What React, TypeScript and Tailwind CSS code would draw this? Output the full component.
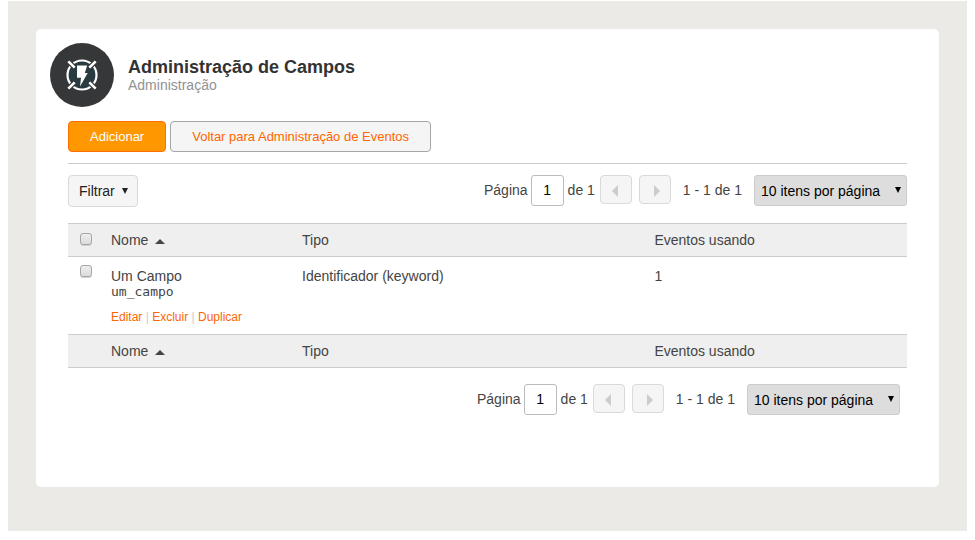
import React, { useState } from 'react';

interface Field {
  name: string;
  key: string;
  type: string;
  events: number;
}

const fields: Field[] = [
  { name: 'Um Campo', key: 'um_campo', type: 'Identificador (keyword)', events: 1 },
];

const actions = ['Editar', 'Excluir', 'Duplicar'];

const checkboxClass =
  'block w-3 h-3 appearance-none rounded-[3px] border border-[#a6a6a6] bg-linear-to-b from-[#eeeeee] to-[#dcdcdc] shadow-[0_1px_0_#d0d0d0] checked:bg-[#ff6600]';

const FieldsIcon: React.FC = () => (
  <svg viewBox="0 0 64 64" className="w-16 h-16 shrink-0" aria-hidden="true">
    <circle cx="32" cy="32" r="32" fill="#363739" />
    <circle cx="32" cy="32" r="14.500" fill="#293a40" stroke="#fff" strokeWidth="2.2" />
    <g stroke="#363739" strokeWidth="5">
      <path d="M18 18l6.500 6.500M46 18l-6.500 6.500M18 46l6.500-6.500M46 46l-6.500-6.500" />
    </g>
    <g stroke="#fff" strokeWidth="2.6">
      <path d="M18.300 18.300l6.400 6.400M45.700 18.300l-6.400 6.400M18.300 45.700l6.400-6.400M45.700 45.700l-6.400-6.400" />
    </g>
    <path d="M27 22.500h10.200L34.800 30h2.900L30 43.600l1-8.800h-4z" fill="#fff" />
  </svg>
);

const SortArrow: React.FC = () => (
  <svg viewBox="0 0 10 5" className="w-[10px] h-[5px] mt-[2px]" aria-hidden="true">
    <path d="M0 5L5 0l5 5z" fill="#444" />
  </svg>
);

const DownArrow: React.FC<{ className?: string }> = ({ className }) => (
  <svg viewBox="0 0 6 6" className={`w-[6px] h-[6px] ${className ?? ''}`} aria-hidden="true">
    <path d="M0 0h6L3 6z" fill="currentColor" />
  </svg>
);

const PageButton: React.FC<{ label: string; path: string }> = ({ label, path }) => (
  <button
    type="button"
    disabled
    aria-label={label}
    className="flex w-8 h-[29px] items-center justify-center rounded border border-[#d9d9d9] bg-[#f5f5f5]"
  >
    <svg viewBox="0 0 10 12" className="w-[10px] h-3 mt-[3px]" aria-hidden="true">
      <path d={path} fill="#ccc" />
    </svg>
  </button>
);

const Pager: React.FC<{ id: string; className?: string }> = ({ id, className }) => {
  const [page, setPage] = useState('1');

  return (
    <div className={`flex items-start leading-[30px] whitespace-nowrap ${className ?? ''}`}>
      <label htmlFor={`page-${id}`}>Página</label>
      <input
        id={`page-${id}`}
        type="text"
        value={page}
        onChange={(e) => setPage(e.target.value)}
        className="ml-[3px] mr-1 w-[33px] h-[31px] rounded-[3px] border border-[#bbb] bg-white pb-[2px] text-center text-black outline-none"
      />
      <span>de 1</span>
      <div className="ml-[5px] flex gap-[7px]">
        <PageButton label="Página anterior" path="M7 0v12L1 6z" />
        <PageButton label="Próxima página" path="M4 0v12l6-6z" />
      </div>
      <span className="mx-3">1 - 1 de 1</span>
      <div className="relative">
        <select
          aria-label="Itens por página"
          className="block w-[153px] h-[31px] appearance-none rounded-[3px] border border-[#ccc] bg-[#ddd] pb-[2px] pl-[6px] text-black outline-none"
        >
          <option>10 itens por página</option>
          <option>25 itens por página</option>
          <option>50 itens por página</option>
        </select>
        <DownArrow className="pointer-events-none absolute right-[6px] top-3 text-black" />
      </div>
    </div>
  );
};

const HeadingCells: React.FC = () => (
  <>
    <th scope="col" className="px-2 font-normal">
      <span className="flex items-center gap-[7px]">
        Nome <SortArrow />
      </span>
    </th>
    <th scope="col" className="px-2 font-normal">Tipo</th>
    <th scope="col" className="px-2 font-normal">Eventos usando</th>
  </>
);

export default function App() {
  return (
    <div className="mx-2 mt-px bg-[#ebeae6] px-7 pt-7 pb-11 font-['Liberation_Sans',Arial,sans-serif] text-sm text-[#444]">
      <main className="rounded-[5px] bg-white pt-[14px] pb-[72px]">
        <header className="flex gap-[14px] px-[14px]">
          <FieldsIcon />
          <div className="pt-[14px]">
            <h1 className="text-lg leading-5 font-bold text-[#333]">Administração de Campos</h1>
            <p className="leading-4 text-[#929292]">Administração</p>
          </div>
        </header>

        <div className="px-8 pt-[14px]">
          <div className="flex gap-1 border-b border-[#ccc] pb-[11px] text-[13px]">
            <button type="button" className="h-[31px] rounded border border-[#ff6f00] bg-[#ff9800] px-[21px] pt-[2px] text-white">
              Adicionar
            </button>
            <button type="button" className="h-[31px] rounded border border-[#a6a6a6] bg-[#f5f5f5] px-[21px] pt-[2px] text-[#ff6600]">
              Voltar para Administração de Eventos
            </button>
          </div>

          <div className="mt-[11px] mb-4 flex items-start justify-between">
            <button
              type="button"
              className="flex h-8 w-[70px] items-center gap-[7px] rounded border border-[#d9d9d9] bg-[#f5f5f5] pl-[10px] text-[#222]"
            >
              Filtrar <DownArrow />
            </button>
            <Pager id="top" />
          </div>

          <table className="w-full table-fixed border-collapse text-left">
            <colgroup>
              <col className="w-[35px]" />
              <col className="w-[191px]" />
              <col className="w-[42%]" />
              <col />
            </colgroup>
            <thead>
              <tr className="h-[33px] border-y border-[#ccc] bg-[#efefef]">
                <td className="pb-[2px] pl-3">
                  <input type="checkbox" aria-label="Selecionar todos" className={checkboxClass} />
                </td>
                <HeadingCells />
              </tr>
            </thead>
            <tbody>
              {fields.map((field) => (
                <tr key={field.key} className="h-[78px] align-top">
                  <td className="pt-2 pl-3">
                    <input type="checkbox" aria-label={`Selecionar ${field.name}`} className={checkboxClass} />
                  </td>
                  <td className="px-2 pt-[11px] leading-4">
                    {field.name}
                    <code className="block font-['DejaVu_Sans_Mono',monospace] text-[13px] leading-4">{field.key}</code>
                    <div className="mt-[9px] text-xs leading-4 whitespace-nowrap text-[#ccc]">
                      {actions.map((action, idx) => (
                        <React.Fragment key={action}>
                          {idx > 0 && ' | '}
                          <a href="#" className="text-[#ff6600]">{action}</a>
                        </React.Fragment>
                      ))}
                    </div>
                  </td>
                  <td className="px-2 pt-[11px] leading-4">{field.type}</td>
                  <td className="px-2 pt-[11px] leading-4">{field.events}</td>
                </tr>
              ))}
            </tbody>
            <tfoot>
              <tr className="h-[33px] border-y border-[#ccc] bg-[#efefef]">
                <td />
                <HeadingCells />
              </tr>
            </tfoot>
          </table>

          <Pager id="bottom" className="mt-4 mr-[7px] justify-end" />
        </div>
      </main>
    </div>
  );
}
